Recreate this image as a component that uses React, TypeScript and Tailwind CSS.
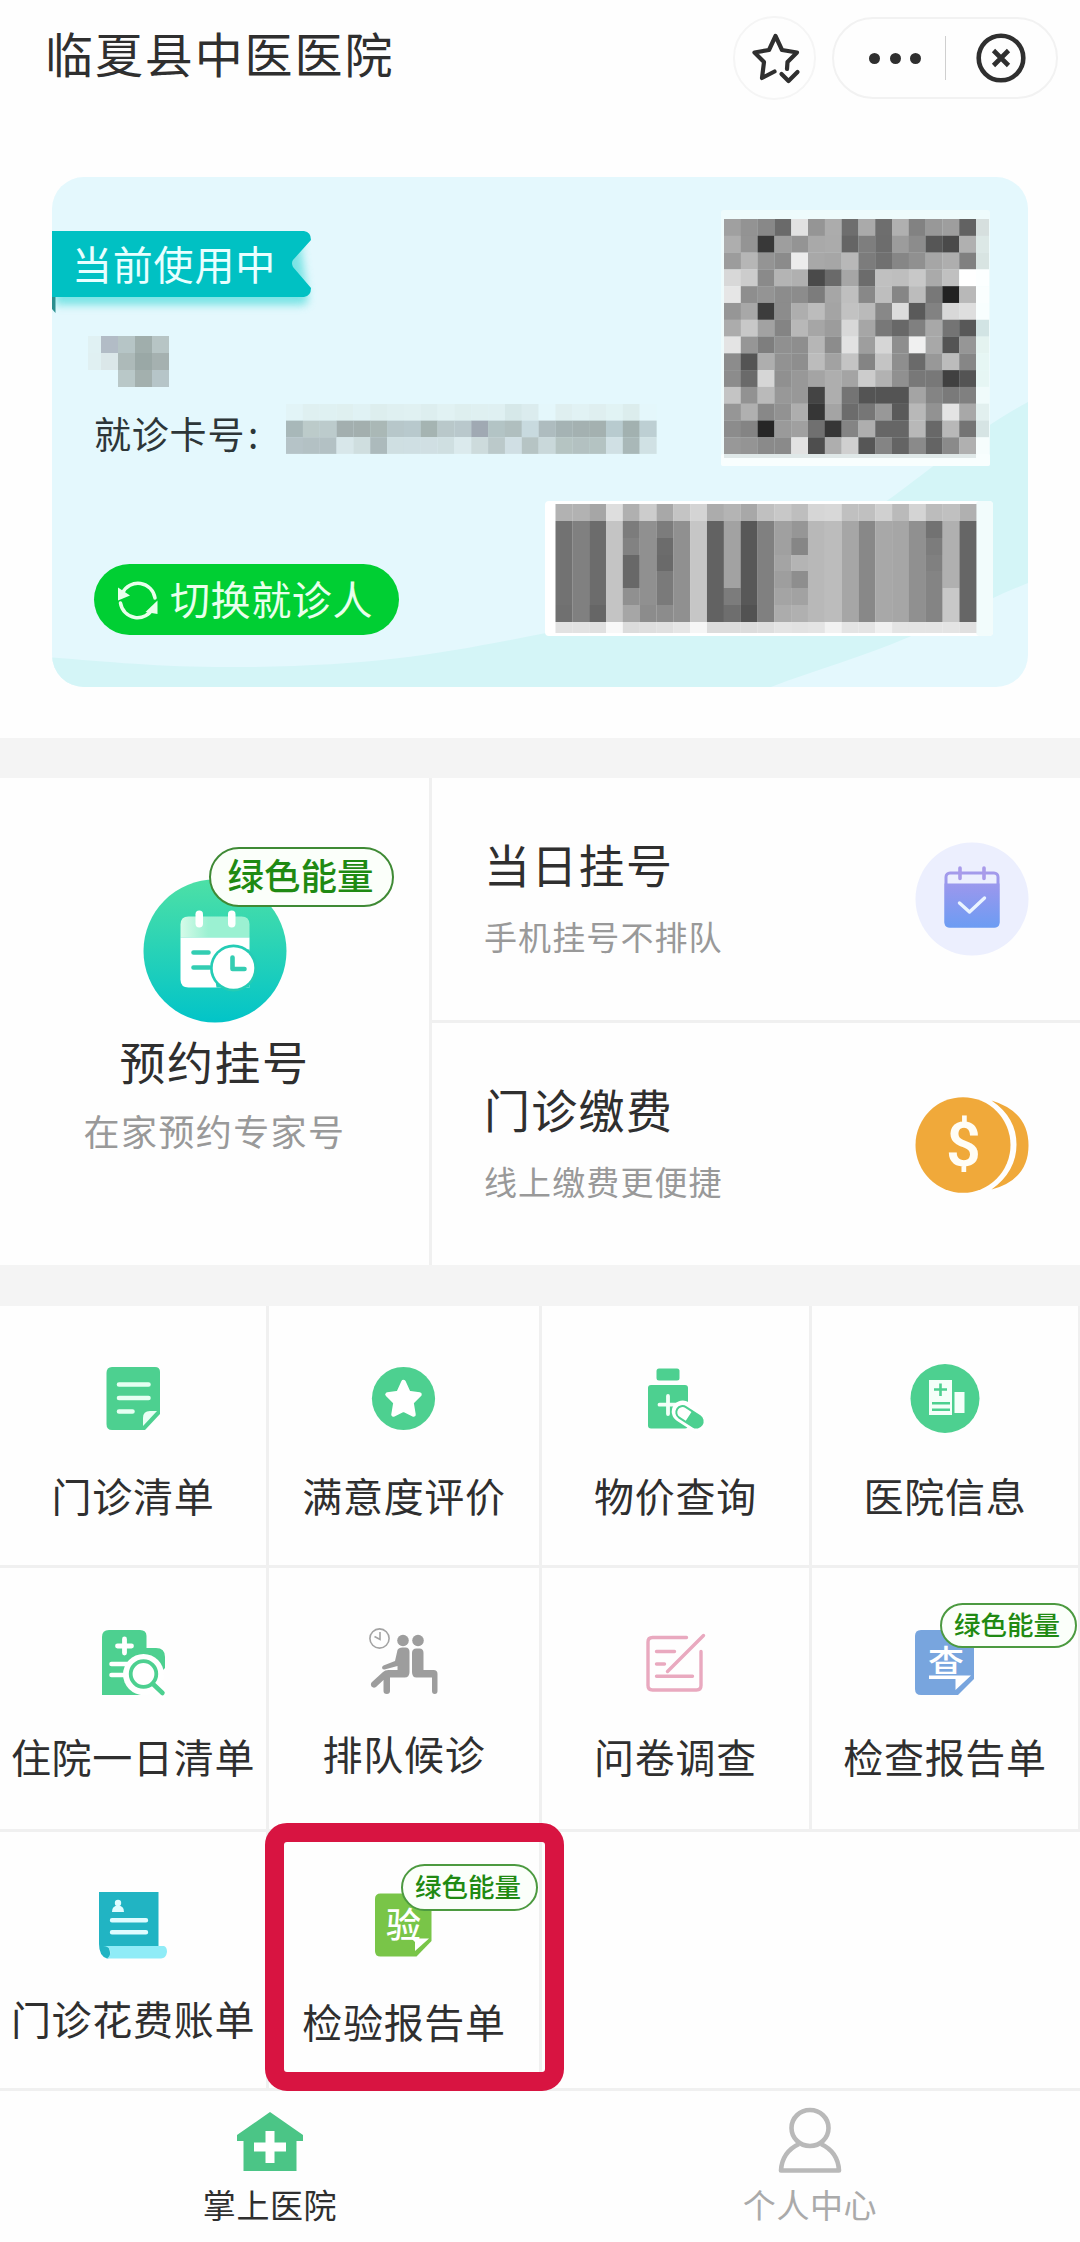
import React from "react";

const QR_ROWS = [
  "a0 93 88 6a e2 95 ac 6e aa 6e b0 82 98 9e 62",
  "ae 94 38 9e 94 a9 ab 65 7e 6d 9c 8c 56 4a b0",
  "9c b6 94 8b ec a8 a6 b8 7c 70 86 90 a6 ae 80",
  "d8 cc 8a b4 b0 4a 6a a6 6c c0 be c8 aa c0 ff",
  "e6 8e 94 8c 8c 7c a6 bf 88 be 86 bc 78 22 b8",
  "96 a8 3c 8c ae bc a4 c2 ba 88 dc 5a 82 d8 de",
  "ac c8 a2 84 b8 a6 9c d8 a6 78 68 80 a8 74 58",
  "e4 96 7e 90 8e b6 8c e2 9e d6 8e f0 a8 54 96",
  "8c 54 ae 92 8e bc a2 c4 84 c4 8e 6a 98 bc 86",
  "8c 6a d6 90 98 a4 ae a4 cc b2 90 78 78 40 54",
  "c4 92 ba 98 98 44 ae 74 54 54 54 a4 84 7a 80",
  "96 b0 88 92 ae 36 a4 6c 76 98 5a b8 92 e4 a8",
  "8c 84 26 9a a0 70 36 84 ae 66 66 b8 68 b8 74",
  "98 94 8a 8a e2 4e ae d0 56 84 64 8a 64 8a b0",
];
const QR_EDGE = ["d6dfde", "dce8e6", "d8e4e2", "fcffff", "fafefe", "f8fefe", "d2e4e4", "e4f3f0", "e6f6f4", "e6f6f4", "f0fbfb", "e2f0ef", "d6e4e4", "f6fdfd"];

const BAR_ROWS = [
  "b2 b2 a6 de b0 cc a8 c4 d4 ac b4 a8 c0 c8 be d6 d8 c0 c0 d0 ba d4 bc c0 b0",
  "72 80 6c c4 7c 90 7c 90 c6 62 a2 58 80 a0 96 b8 bc a6 88 a8 a6 90 72 b0 66",
  "72 80 6c c4 82 90 6c 90 c6 62 a2 58 80 a0 86 b8 bc a6 88 a8 a6 90 7c b0 66",
  "72 80 6c c4 68 90 6a 90 c6 62 a2 58 80 a4 b4 b8 bc a6 88 a8 a6 90 80 b0 66",
  "72 80 6c c4 68 90 7a 90 c6 62 a2 58 80 9e 8e b8 bc a6 88 a8 a6 90 84 b0 66",
  "72 80 6c c4 90 90 7a 90 c6 62 7c 58 80 a4 a2 b8 bc a6 88 a8 a6 90 84 c8 66",
  "70 80 66 c4 a6 8c 8c 90 c6 62 6e 52 80 ac b0 b8 bc a6 88 a8 a6 90 84 c8 66",
  "e2 e2 e0 f8 dc de e0 e6 f6 dc dc dc de e4 e2 e4 f2 e4 e4 f0 e4 e4 e4 e4 e0",
];
const BAR_Y = [504, 521, 538, 555, 571, 588, 605, 622, 633];

const NAME_ROWS = [
  ["#e0f1f3", "#b2bcc6", "#b6c5c6", "#a0aeac", "#b7c5c5"],
  ["#e0f0f2", "#dbe7e9", "#adbab9", "#9aa8a6", "#a5b1b0"],
  ["", "", "#b9c8c8", "#a3b0ae", "#b6c5c8"],
];
const NO_ROWS = [
  "e2f4f7 dff0f1 dff1f2 dff0f0 e0f2f4 ddeeee dff0f1 e0f1f2 ddeeef e1f2f3 deefef dff0f1 dff0f2 d6e8e9 dbecee e4f7fb dfeff0 e1f2f4 dfeff0 e1f3f4 dceded e4f7fb",
  "a8b8b9 bccbca bccbcc a3afaf a3afae aab8b6 b7c7ca b8c9cd a5b4b2 b9c8ca b9c8cc a0a9b3 b3c4c5 b0bfbf c8dadf aebcbf a5b3b4 a4b1b1 a4b1b0 b8cbcf a2b1b0 bdcfd3",
  "b5c3c7 b3c1c4 b3c1c4 d8e7ea cfdedf acbabc cfdfe2 cfdfe3 d0dfe3 cfdfe1 dbeaed cddbdc bbc9ca d0dfe4 b6c4c4 c9d8da b5c4c2 b3c1c1 b4c3c2 d0e0e4 a9b8b8 d0e1e4",
];

function QrMosaic() {
  return (
    <svg className="mt-[29px] mr-8 block h-[264px] w-[280px]" viewBox="716 206 280 264">
      <rect x="721" y="210" width="269" height="256" rx="3" fill="#eefbfc" />
      <rect x="721" y="454" width="269" height="12" rx="2" fill="#f8fefe" />
      {QR_ROWS.map((row, r) =>
        row.split(" ").map((c, i) => (
          <rect key={r + "-" + i} x={724 + i * 16.8} y={219 + r * 16.79} width="17" height="17" fill={"#" + c + c + c} />
        )),
      )}
      {QR_EDGE.map((c, r) => (
        <rect key={r} x="976" y={219 + r * 16.79} width="13" height="17" fill={"#" + c} />
      ))}
      <rect x="724" y="454" width="252" height="4" fill="#dfe8e8" />
    </svg>
  );
}

function BarcodeMosaic() {
  return (
    <svg className="mr-[34px] block h-[137px] w-[450px] shrink-0" viewBox="544 500 450 137">
      <rect x="545" y="501" width="448" height="135" rx="4" fill="#ffffff" />
      <rect x="976" y="501" width="17" height="135" rx="4" fill="#f2fcfc" />
      {BAR_ROWS.map((row, r) =>
        row.split(" ").map((c, i) => (
          <rect
            key={r + "-" + i}
            x={555.5 + i * 16.83}
            y={BAR_Y[r]}
            width="17"
            height={BAR_Y[r + 1] - BAR_Y[r]}
            fill={"#" + c + c + c}
          />
        )),
      )}
    </svg>
  );
}

function Badge({ small = false }: { small?: boolean }) {
  return small ? (
    <span className="flex h-full w-full items-center justify-center rounded-full border-2 border-[#4c9a40] bg-[#fbfffa] pr-[3px] pb-0.5 text-[26.5px] leading-none font-medium whitespace-nowrap text-[#1f8a12]">
      绿色能量
    </span>
  ) : (
    <span className="flex h-full w-full items-center justify-center rounded-full border-2 border-[#3f8a35] bg-[#fbfffa] pr-[2px] pb-[3px] text-[36.5px] leading-none font-medium whitespace-nowrap text-[#1f8a12]">
      绿色能量
    </span>
  );
}

function CardPanel() {
  return (
    <div className="relative mx-[52px] flex h-[510px] flex-col overflow-hidden rounded-[32px] bg-[#e4f8fd]">
      <svg className="absolute inset-0 h-[510px] w-[976px]" viewBox="52 177 976 510">
        <path
          d="M52 657.500C110 662 170 668 244 667C380 666 450 652 546 633C680 607 790 560 888 500C920 478 975 430 1028 402V583C985 600 950 620 909 637C860 658 815 670 771 687H52Z"
          fill="#d4f5f7"
        />
      </svg>
      <div className="relative flex h-[323px] justify-between">
        <div className="pt-[54px]">
          <div className="relative h-[66px] w-[262px]">
            <svg className="absolute top-0 left-0 h-[90px] w-[280px]" viewBox="52 231 280 90">
              <defs>
                <filter id="ribbonShadow" x="-10%" y="-20%" width="120%" height="160%">
                  <feGaussianBlur stdDeviation="4" />
                </filter>
              </defs>
              <path d="M55 240H300L308 300Q308 305 300 305H55Z" fill="#5fdfdf" filter="url(#ribbonShadow)" opacity="0.8" />
              <path d="M52 297H55.500V313L52 309Z" fill="#2b8f8f" />
              <path
                d="M52 231H304Q311 232 311 240L293 260Q291 263 293 267L311 288Q311 296 304 297H52Z"
                fill="#00c1c3"
              />
            </svg>
            <span className="relative block pl-[20px] text-[40px] leading-[64px] tracking-[0.800px] text-[#e8ffff]">当前使用中</span>
          </div>
          <svg className="mt-[39px] ml-9 block h-[51px] w-[81px]" viewBox="88 336 81 51">
            {NAME_ROWS.map((row, r) =>
              row.map((c, i) =>
                c ? (
                  <rect
                    key={r + "-" + i}
                    x={i === 0 ? 88 : 84 + i * 17}
                    y={336 + r * 17}
                    width={i === 0 ? 13 : 17}
                    height="17"
                    fill={c}
                  />
                ) : null,
              ),
            )}
          </svg>
          <div className="mt-[17px] flex items-start pl-[42px]">
            <span className="w-[150px] pt-0.5 text-[37px] leading-[54px] tracking-[0.800px] whitespace-nowrap text-[#2d3638]">就诊卡号</span>
            <span className="w-[41.700px] pt-0.5 pl-1 text-[37px] leading-[54px] text-[#2d3638]">:</span>
            <svg className="block h-[50px] w-[371px]" viewBox="285.700 404 371 50">
              {NO_ROWS.map((row, r) =>
                row.split(" ").map((c, i) => (
                  <rect
                    key={r + "-" + i}
                    x={285.7 + i * 16.84}
                    y={404 + r * 16.6}
                    width="17"
                    height="16.700"
                    fill={"#" + c}
                  />
                )),
              )}
            </svg>
          </div>
        </div>
        <QrMosaic />
      </div>
      <div className="relative flex justify-between pl-[42px]">
        <button className="mt-16 flex h-[71px] w-[305px] items-center rounded-full bg-[#00cf33] pl-[23px] text-[#e9ffec]">
          <svg className="h-[42px] w-[42px] shrink-0" viewBox="0 0 42 42" fill="none">
            <path d="M5.500 14A17.200 17.200 0 0 1 38 19" stroke="currentColor" strokeWidth="3.500" strokeLinecap="round" />
            <path d="M3.500 24A17.200 17.200 0 0 0 36 29" stroke="currentColor" strokeWidth="3.500" strokeLinecap="round" />
            <path d="M1 8.500V21.500L13 16.500Z" fill="currentColor" />
            <path d="M40.500 21.500V35L28.500 33Z" fill="currentColor" />
          </svg>
          <span className="ml-[11px] pb-1 text-[40px] leading-[56px] tracking-[0.600px] whitespace-nowrap">切换就诊人</span>
        </button>
        <BarcodeMosaic />
      </div>
    </div>
  );
}

function Header() {
  return (
    <header className="flex h-[177px] items-start justify-between pl-[45px]">
      <h1 className="mt-[17px] text-[48px] leading-[70px] tracking-[1.900px] text-[#2f2f2f]">临夏县中医医院</h1>
      <div className="mt-4 mr-[22px] flex items-start gap-4">
        <div className="flex h-[84px] w-[83px] items-center justify-center rounded-full border-2 border-[#f5f5f5]">
          <svg className="h-[60px] w-[60px]" viewBox="744 28 60 60" fill="none" stroke="#2f2f2f" strokeWidth="4.200" strokeLinejoin="round" strokeLinecap="round">
            <path d="M773.500 71.500L761 78L763 62L753.500 52.500L768 50L774.500 36L781 50L796 52.500L786.500 62L786 69" />
            <path d="M780.500 74L787.500 81L796.500 72" />
          </svg>
        </div>
        <div className="mt-px flex h-[82px] w-[226px] items-center rounded-full border-2 border-[#f2f2f2]">
          <div className="flex w-[111px] gap-[9.600px] pl-[35px]">
            <i className="block h-[11px] w-[11px] rounded-full bg-[#2f2f2f]" />
            <i className="block h-[11px] w-[11px] rounded-full bg-[#2f2f2f]" />
            <i className="block h-[11px] w-[11px] rounded-full bg-[#2f2f2f]" />
          </div>
          <div className="h-11 w-px bg-[#cfcfcf]" />
          <svg className="ml-[29px] h-[52px] w-[52px]" viewBox="0 0 52 52" fill="none" stroke="#2f2f2f" strokeWidth="4.600">
            <circle cx="26" cy="26" r="22.300" />
            <path d="M18.500 18.500L33.500 33.500M33.500 18.500L18.500 33.500" />
          </svg>
        </div>
      </div>
    </header>
  );
}

function BookingIcon() {
  return (
    <svg className="block h-[144px] w-[144px]" viewBox="142.500 879.500 144 144">
      <defs>
        <linearGradient id="bookBg" x1="0" y1="0" x2="0" y2="1">
          <stop offset="0" stopColor="#4de0a6" />
          <stop offset="1" stopColor="#02c4c8" />
        </linearGradient>
        <linearGradient id="bookTop" x1="0" y1="0" x2="1" y2="0">
          <stop offset="0" stopColor="#d6fbe9" />
          <stop offset="0.400" stopColor="#9bf1d2" />
          <stop offset="1" stopColor="#9bf1d2" />
        </linearGradient>
      </defs>
      <circle cx="214.500" cy="951.500" r="71.500" fill="url(#bookBg)" />
      <path d="M180 938V925Q180 917 188 917H241Q249 917 249 925V938Z" fill="url(#bookTop)" />
      <path d="M180 938H249V988H188Q180 988 180 980Z" fill="#fff" />
      <path d="M249 950V988H216Q214 975 214 968Q222 948 249 950Z" fill="#1fcdb8" />
      <rect x="195" y="911" width="7.500" height="17" rx="3.700" fill="#fff" />
      <rect x="227.500" y="911" width="7.500" height="17" rx="3.700" fill="#fff" />
      <path d="M193 953H208M193 968H209" stroke="#33cdb2" strokeWidth="4.600" strokeLinecap="round" />
      <circle cx="233" cy="968.500" r="23.500" fill="#25ccb5" />
      <circle cx="233" cy="968.500" r="20.800" fill="#fff" />
      <path d="M232 958V969.500H244" stroke="#33cdb2" strokeWidth="4.600" strokeLinecap="round" strokeLinejoin="round" fill="none" />
    </svg>
  );
}

function TodayIcon() {
  return (
    <svg className="block h-[114px] w-[114px]" viewBox="915.500 841.500 114 114">
      <defs>
        <linearGradient id="cal" x1="0" y1="866" x2="0" y2="927" gradientUnits="userSpaceOnUse">
          <stop offset="0" stopColor="#a99bea" />
          <stop offset="0.400" stopColor="#9498ee" />
          <stop offset="1" stopColor="#6c9cf3" />
        </linearGradient>
      </defs>
      <circle cx="972.500" cy="898.500" r="56.500" fill="#eceffe" />
      <rect x="946.500" y="872.500" width="52" height="53" rx="4" fill="none" stroke="url(#cal)" strokeWidth="3" />
      <path d="M945 883H1000V922Q1000 927 995 927H950Q945 927 945 922Z" fill="url(#cal)" />
      <path d="M960.500 867.500V878M984.500 867.500V878" stroke="#a99bea" strokeWidth="3.600" strokeLinecap="round" />
      <path d="M960 902.500L970 911.500L985 897.500" fill="none" stroke="#eaf4ff" strokeWidth="3.400" strokeLinecap="round" strokeLinejoin="round" />
    </svg>
  );
}

function CoinIcon() {
  return (
    <svg className="block h-[114px] w-[114px]" viewBox="915.500 1087.500 114 114">
      <path d="M992 1101Q1029 1112 1029 1146Q1029 1180 992 1190Q1017 1172 1017 1145Q1017 1118 992 1101Z" fill="#f0a93a" />
      <ellipse cx="963.500" cy="1145.500" rx="47.500" ry="47.800" fill="#f0a93a" />
      <text x="964" y="1166" textAnchor="middle" fontFamily="Roboto" fontWeight="600" fontSize="61" fill="#fffdf5">
        $
      </text>
    </svg>
  );
}

function Entry({ title, sub, icon }: { title: string; sub: string; icon: React.ReactNode }) {
  return (
    <div className="flex flex-1 items-center justify-between pr-[51px] pl-[52px]">
      <div className="pb-[8px]">
        <div className="text-[46px] leading-[66px] tracking-[1.300px] text-[#2f2f2f]">{title}</div>
        <div className="mt-[16px] text-[33px] leading-[48px] tracking-[1.100px] text-[#999]">{sub}</div>
      </div>
      {icon}
    </div>
  );
}

const G = "#4dd090";

function Icon({ x, y, children }: { x: number; y: number; children: React.ReactNode }) {
  return (
    <svg className="block h-20 w-20 shrink-0" viewBox={x + " " + y + " 80 80"} overflow="visible">
      {children}
    </svg>
  );
}

function Cell({
  label,
  icon,
  className,
  labelClass,
  children,
}: {
  label: string;
  icon: React.ReactNode;
  className: string;
  labelClass: string;
  children?: React.ReactNode;
}) {
  return (
    <div className={"relative flex flex-col items-center border-[#f0f0f0] " + className}>
      {icon}
      <div className={"text-[40px] leading-[56px] tracking-[0.700px] whitespace-nowrap text-[#2f2f2f] " + labelClass}>{label}</div>
      {children}
    </div>
  );
}

function Services() {
  return (
    <div>
      <div className="grid h-[262px] grid-cols-[269px_273px_270px_268px] border-b-[3px] border-[#f0f0f0]">
        <Cell
          label="门诊清单"
          className="border-r-[3px] pt-[52px]"
          labelClass="mt-[29px]"
          icon={
            <Icon x={93} y={1358}>
              <path d="M112 1367H155Q160 1367 160 1372V1414L145 1430H112Q106.500 1430 106.500 1424V1373Q106.500 1367 112 1367Z" fill={G} />
              <path d="M119 1384.500H148.500M119 1398H148.500M119 1411.500H132.500" stroke="#e6fff2" strokeWidth="4.600" strokeLinecap="round" />
              <path d="M143 1426V1418Q143 1411 150 1411H157Z" fill="#e9fff4" />
            </Icon>
          }
        />
        <Cell
          label="满意度评价"
          className="border-r-[3px] pt-[52px]"
          labelClass="mt-[29px]"
          icon={
            <Icon x={363.5} y={1358}>
              <circle cx="403" cy="1398.500" r="31.600" fill={G} />
              <path
                d="M403 1382L408 1393L419 1394.500L411 1402.500L413 1414.500L403 1409.500L393 1414.500L395 1402.500L387 1394.500L398 1393Z"
                fill="#fff"
                stroke="#fff"
                strokeWidth="4.500"
                strokeLinejoin="round"
              />
            </Icon>
          }
        />
        <Cell
          label="物价查询"
          className="border-r-[3px] pt-[52px]"
          labelClass="mt-[29px]"
          icon={
            <Icon x={635.5} y={1358}>
              <rect x="656" y="1368.500" width="23" height="12" rx="2.500" fill={G} />
              <rect x="647.500" y="1385" width="40" height="43.500" rx="3" fill={G} />
              <path d="M659 1404.700H677M667.500 1396V1414" stroke="#f2fff8" strokeWidth="3.800" strokeLinecap="round" />
              <g transform="rotate(33 688 1416.500)">
                <rect x="669.500" y="1404.500" width="39" height="22" rx="11" fill="#fff" />
                <rect x="673.500" y="1409" width="31" height="14.500" rx="7.200" fill={G} />
                <path d="M688 1411H680.700A5.200 5.200 0 0 0 680.700 1421.500H688Z" fill="#fff" />
              </g>
            </Icon>
          }
        />
        <Cell
          label="医院信息"
          className="border-r-2 pt-[52px]"
          labelClass="mt-[29px]"
          icon={
            <Icon x={905} y={1358}>
              <circle cx="945" cy="1398.500" r="34.500" fill={G} />
              <rect x="929" y="1380" width="23" height="35" fill="#f4fff9" />
              <rect x="954.500" y="1392" width="10" height="21" fill="#f4fff9" />
              <path d="M934 1389.500H947M940.500 1383.500V1396M932 1403.300H950M932 1409.700H950" stroke={G} strokeWidth="2.600" />
            </Icon>
          }
        />
      </div>

      <div className="grid h-[264px] grid-cols-[269px_273px_270px_268px] border-b-[3px] border-[#f0f0f0]">
        <Cell
          label="住院一日清单"
          className="border-r-[3px] pt-[54px]"
          labelClass="mt-[26px]"
          icon={
            <Icon x={93} y={1622}>
              <path d="M109 1630H140Q146.500 1630 146.500 1636V1648H156Q165 1648 165 1657V1668L140 1695H102V1637Q102 1630 109 1630Z" fill={G} />
              <path d="M124.500 1639V1653M117.500 1646H131.500" stroke="#fff" strokeWidth="4.800" strokeLinecap="round" />
              <path d="M111.500 1664H130M111.500 1675H130" stroke="#fff" strokeWidth="4.600" strokeLinecap="round" />
              <circle cx="143.500" cy="1674.500" r="20.500" fill="#fff" />
              <path d="M150 1682L166 1697" stroke="#fff" strokeWidth="9" />
              <circle cx="143.500" cy="1674" r="12.800" fill="#fff" stroke={G} strokeWidth="3.800" />
              <path d="M153 1684L162.500 1693" stroke={G} strokeWidth="4.500" strokeLinecap="round" />
            </Icon>
          }
        />
        <Cell
          label="排队候诊"
          className="border-r-[3px] pt-[54px]"
          labelClass="mt-[23px]"
          icon={
            <Icon x={363.5} y={1622}>
              <g fill="none" stroke="#a3a3a3">
                <circle cx="379" cy="1638.500" r="9.600" strokeWidth="1.600" />
                <path d="M379.500 1632V1639.500L374 1636.500" strokeWidth="1.600" />
              </g>
              <g fill="#9d9d9d">
                <circle cx="402.500" cy="1640.500" r="5.800" />
                <circle cx="417.500" cy="1640.500" r="5.800" />
                <path d="M402 1647.500H405Q409 1647.500 409 1652V1672Q409 1677.500 404 1677.500H389.500V1691Q389.500 1694 386.300 1694Q383 1694 383 1691V1680L375.500 1687Q373 1688.500 371 1686.500Q369.500 1684 371.500 1682L382.500 1672Q384.500 1670 388 1670H397V1666L384 1669.500Q382 1669.500 381.500 1668Q381.500 1666 383 1665.500L394.500 1661L397 1650Q398 1647.500 402 1647.500Z" />
                <path d="M416 1648.500H419Q423 1648.500 423 1653V1670H433Q437 1670 437 1674V1691Q437 1694 434.300 1694Q431.500 1694 431.500 1691V1677.500H416Q411.500 1677.500 411.500 1672V1653Q411.500 1648.500 416 1648.500Z" />
              </g>
            </Icon>
          }
        />
        <Cell
          label="问卷调查"
          className="border-r-[3px] pt-[54px]"
          labelClass="mt-[26px]"
          icon={
            <Icon x={635.5} y={1622}>
              <g fill="none" stroke="#e9a9bf" strokeWidth="3.400" strokeLinecap="round">
                <path d="M686 1637.500H652Q647.500 1637.500 647.500 1642V1685.500Q647.500 1690 652 1690H696Q700.500 1690 700.500 1685.500V1651.500" />
                <path d="M656 1651.500H674M656 1664H664M656 1676.300H692M667 1671.500L703 1635.500" />
              </g>
            </Icon>
          }
        />
        <Cell
          label="检查报告单"
          className="border-r-2 pt-[54px]"
          labelClass="mt-[26px]"
          icon={
            <Icon x={905} y={1622}>
              <path d="M921 1630H968Q974 1630 974 1636V1679L958 1695H921Q915 1695 915 1689V1636Q915 1630 921 1630Z" fill="#78a5de" />
              <text x="946" y="1676.500" textAnchor="middle" fontFamily="Noto Sans CJK SC" fontWeight="500" fontSize="36" fill="#fff">
                查
              </text>
              <path d="M929 1675.500H971L955.500 1690V1679H929Z" fill="#fff" />
            </Icon>
          }
        >
          <div className="absolute top-[35px] left-[128px] h-[45px] w-[137px]">
            <Badge small />
          </div>
        </Cell>
      </div>

      <div className="grid h-[259px] grid-cols-[269px_273px_270px_268px] border-b-[3px] border-[#f0f0f0]">
        <Cell
          label="门诊花费账单"
          className="border-r-[3px] pt-[53px]"
          labelClass="mt-[25px]"
          icon={
            <Icon x={93} y={1885}>
              <path d="M99 1892H158.500V1947H109Q112 1959 107 1958.500Q99 1956 99 1944Z" fill="#21b4c3" />
              <path d="M103 1946H164Q167 1947 167 1952Q166 1958.500 161 1958.500H107Q111 1956 110 1950Q108 1946 103 1946Z" fill="#8fecf7" />
              <circle cx="118" cy="1903" r="3.200" fill="#dffcff" />
              <path d="M112 1912Q112 1905.500 118 1905.500Q124 1905.500 124 1912Z" fill="#dffcff" />
              <path d="M112 1920.300H146M112 1932.300H146" stroke="#dffcff" strokeWidth="4.400" strokeLinecap="round" />
            </Icon>
          }
        />
        <Cell
          label="检验报告单"
          className="border-r-[3px] pt-[53px]"
          labelClass="mt-[28px]"
          icon={
            <Icon x={363.5} y={1885}>
              <path d="M380 1893.500H431V1941L416 1956.500H380Q374.500 1956.500 374.500 1951V1899Q374.500 1893.500 380 1893.500Z" fill="#79c548" />
              <text x="403" y="1938" textAnchor="middle" fontFamily="Noto Sans CJK SC" fontWeight="500" fontSize="35" fill="#fff">
                验
              </text>
              <path d="M411 1938.500H428.500L414.500 1951V1942Z" fill="#fff" />
            </Icon>
          }
        >
          <div className="absolute top-8 left-[132px] h-[47px] w-[137px]">
            <Badge small />
          </div>
          <div className="absolute top-[-9px] left-[-4.500px] z-10 h-[268px] w-[299px] rounded-[22px] border-[19px] border-[#d81441]" />
        </Cell>
      </div>
    </div>
  );
}

function TabBar() {
  return (
    <nav className="grid h-[151px] grid-cols-2">
      <div className="flex flex-col items-center pt-[15px]">
        <svg className="block h-[70px] w-[70px]" viewBox="235.500 2106 70 70">
          <path d="M270.500 2112L303.500 2135V2141H297V2171H244V2141H237.500V2135Z" fill="#4bc586" />
          <path d="M270.500 2131V2163M254.500 2147H286.500" stroke="#fff" strokeWidth="9" />
        </svg>
        <span className="mt-[5px] text-[33px] leading-[46px] tracking-[0.600px] text-[#2f2f2f]">掌上医院</span>
      </div>
      <div className="flex flex-col items-center pt-[15px]">
        <svg className="block h-[70px] w-[70px]" viewBox="775 2106 70 70" fill="none" stroke="#b9b9b9" strokeWidth="4.600" strokeLinejoin="round">
          <ellipse cx="810" cy="2128" rx="18.500" ry="18" />
          <path d="M799 2144Q782 2152 781 2170.500H839Q838 2152 821 2144" />
        </svg>
        <span className="mt-[5px] text-[33px] leading-[46px] tracking-[0.600px] text-[#aaa]">个人中心</span>
      </div>
    </nav>
  );
}

export default function App() {
  return (
    <div className="h-[2242px] w-[1080px] overflow-hidden bg-[#fefefe] font-['Noto_Sans_CJK_SC',sans-serif]">
      <Header />
      <CardPanel />
      <div className="mt-[51px] h-10 bg-[#f4f4f4]" />
      <div className="flex h-[487px]">
        <div className="relative flex w-[432px] flex-col items-center border-r-[3px] border-[#f0f0f0] pt-[101px]">
          <BookingIcon />
          <div className="mt-[4px] text-[46px] leading-[66px] tracking-[1.500px] text-[#2f2f2f]">预约挂号</div>
          <div className="mt-[11px] text-[36px] leading-[52px] tracking-[1.400px] text-[#999]">在家预约专家号</div>
          <div className="absolute top-[69px] left-[209px] h-[60px] w-[185px]">
            <Badge />
          </div>
        </div>
        <div className="flex flex-1 flex-col">
          <Entry title="当日挂号" sub="手机挂号不排队" icon={<TodayIcon />} />
          <div className="h-[3px] bg-[#f0f0f0]" />
          <Entry title="门诊缴费" sub="线上缴费更便捷" icon={<CoinIcon />} />
        </div>
      </div>
      <div className="h-[41px] bg-[#f4f4f4]" />
      <Services />
      <TabBar />
    </div>
  );
}
